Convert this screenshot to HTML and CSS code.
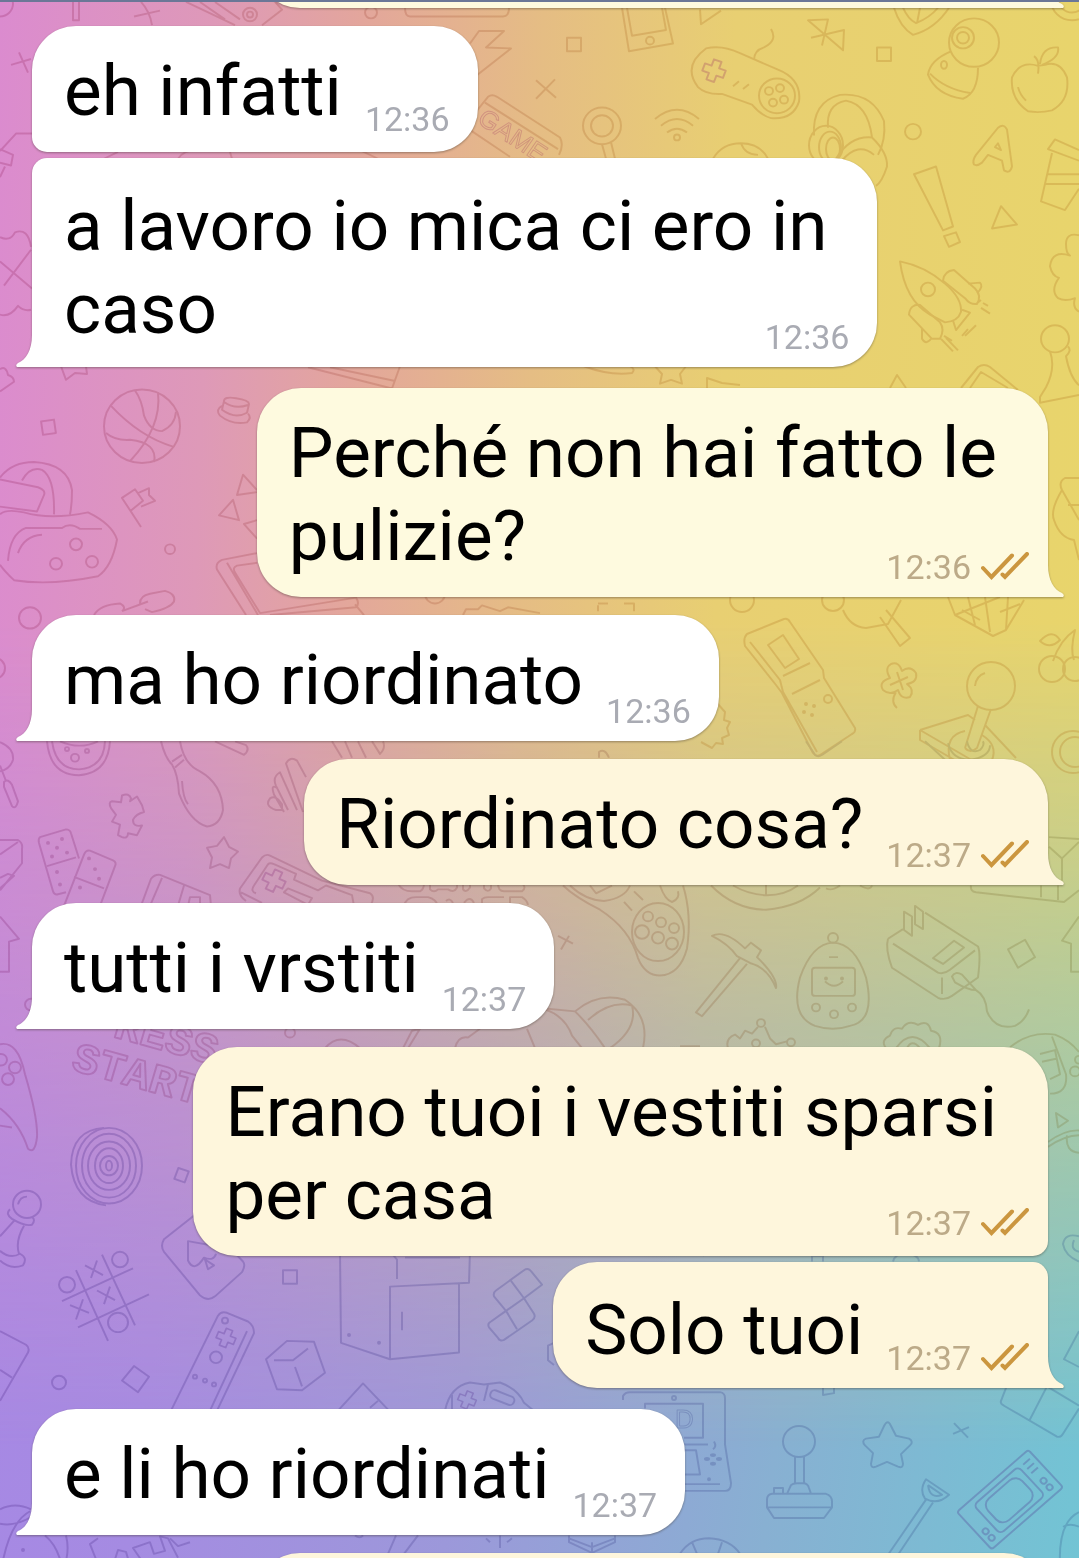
FILE: index.html
```html
<!DOCTYPE html>
<html lang="it">
<head>
  <meta charset="UTF-8">
  <meta name="viewport" content="width=device-width, initial-scale=1.0">
  <link rel="stylesheet" href="styles.css">
  <title>Chat</title>
</head>
<body>

  <svg class="defs" width="0" height="0" aria-hidden="true">
    <symbol id="ticks" viewBox="0 0 48 28">
      <path d="M2 16L10.5 25L31 3.5M21.5 22.5L24 25L46 2"/>
    </symbol>
  </svg>

  <div class="wallpaper">
    <div class="wallpaper-top"></div>
    <svg class="doodles" viewBox="0 0 1079 1558" preserveAspectRatio="xMidYMid slice" aria-hidden="true">
      <defs>
        <linearGradient id="inkTop" gradientUnits="userSpaceOnUse" x1="0" y1="0" x2="700" y2="0">
          <stop offset="0" stop-color="#94235f"/>
          <stop offset="1" stop-color="#b0701c"/>
        </linearGradient>
        <linearGradient id="inkMid" gradientUnits="userSpaceOnUse" x1="0" y1="0" x2="1079" y2="0">
          <stop offset="0" stop-color="#802272"/>
          <stop offset=".6" stop-color="#8f5a3a"/>
          <stop offset="1" stop-color="#767230"/>
        </linearGradient>
        <linearGradient id="inkLow" gradientUnits="userSpaceOnUse" x1="0" y1="0" x2="1079" y2="0">
          <stop offset="0" stop-color="#482286"/>
          <stop offset="1" stop-color="#2f548c"/>
        </linearGradient>
        <path id="dpad" d="M-4 -11H4V-4H11V4H4V11H-4V4H-11V-4H-4Z"/>
      </defs>

      <!-- first rows: controllers, phone, apple, rocket -->
      <g stroke="url(#inkTop)" transform="scale(1 .968)">
        <path d="M11 67L31 61M19 54L28 75M73 2V21H79V2M134 17L160 11M141 2Q150 12 152 26"/>
        <path d="M186 2L235 26M200 2L225 20M215 2L240 20M262 26L282 10L275 2"/>
        <circle cx="250" cy="15" r="7"/><circle cx="250" cy="15" r="3"/>
        <circle cx="0" cy="4" r="13"/>
        <circle cx="371" cy="13" r="6"/>
        <path d="M405 8Q405 17 410 17H503Q509 17 509 8"/>
        <path d="M470 45L479 32H504L486 49L511 50L474 80"/>
        <path d="M536 83L556 101M555 82L536 102"/>
        <path d="M474 118L488 100Q492 97 497 100L560 142Q564 150 559 160M452 150L474 118M485 106L558 154M464 130L510 162"/>
        <text class="word word-small" transform="translate(476 126) rotate(34)">GAME</text>
        <path d="M0 156L16 138H32M0 154L13 160L11 171L0 168M5 172L0 183"/>
        <path d="M0 245Q10 250 15 240Q28 235 31 255M0 270L32 298M31 258L4 295M0 325Q10 328 18 316Q24 322 31 320"/>
        <path d="M104 164L118 157M178 164Q184 155 196 155M230 157L232 164M360 155L378 164"/>

        <rect x="567" y="39" width="14" height="14"/>
        <path d="M622 8L629 53L673 45L665 8M627 8L632 37L666 31L662 8"/><circle cx="650" cy="42" r="4"/>
        <path d="M700 10L701 25L721 11"/>
        <path d="M706 50Q722 46 740 55L778 72Q802 82 799 105Q793 124 771 122Q762 120 752 108L722 97Q706 98 698 90Q682 68 706 50Z"/>
        <circle cx="777" cy="99" r="18"/><circle cx="769" cy="94" r="4"/><circle cx="780" cy="91" r="4"/><circle cx="773" cy="106" r="4"/><circle cx="784" cy="103" r="4"/>
        <use href="#dpad" transform="translate(714 73) rotate(20)"/>
        <path d="M754 62Q754 52 764 49Q778 42 771 30M733 89L739 84M743 92L749 87"/>
        <path d="M811 39L844 31L843 52L808 21L828 20L822 47"/>
        <rect x="877" y="49" width="14" height="14"/>
        <path d="M894 8Q900 28 913 36Q935 30 949 8M903 8Q908 20 916 24Q930 18 938 8M920 8L917 24"/>
        <circle cx="974" cy="44" r="25"/><circle cx="963" cy="39" r="11"/><circle cx="963" cy="39" r="6"/>
        <path d="M951 53Q930 62 928 77Q936 98 963 102Q978 96 978 70M930 76Q945 92 970 96"/><ellipse cx="944" cy="67" rx="3" ry="4"/>
        <path d="M1038 68Q1020 62 1012 80Q1010 102 1028 115Q1040 117 1052 114Q1070 104 1067 80Q1060 62 1045 67ZM1038 76Q1040 62 1034 58M1040 66Q1042 48 1058 49Q1060 60 1042 67M1018 90Q1020 98 1026 104"/>
        <circle cx="1072" cy="0" r="21"/><circle cx="1072" cy="0" r="13"/>
        <circle cx="602" cy="130" r="19"/><circle cx="602" cy="130" r="11"/>
        <path d="M602 149L606 164M611 147L615 164"/>
        <circle cx="677" cy="142" r="3"/>
        <path d="M667 137Q677 129 687 137M661 130Q677 116 693 130M655 123Q677 104 699 123"/>
        <path d="M713 164Q722 148 741 148Q760 148 768 164M741 148Q745 160 758 160"/>
        <path d="M814 140Q812 105 840 98Q872 95 884 125Q886 145 878 160M828 132Q826 108 846 104Q868 108 872 142M836 164Q850 140 872 142Q888 158 887 172Q882 188 876 192M842 166Q858 146 874 160"/>
        <ellipse cx="826" cy="150" rx="17" ry="20"/><ellipse cx="830" cy="152" rx="11" ry="16"/><ellipse cx="833" cy="154" rx="7" ry="12"/>
        <circle cx="913" cy="136" r="8"/>
        <path d="M974 170Q972 166 976 160L998 132Q1004 127 1007 134L1012 172Q1010 180 1004 176L1002 166L988 160L982 168Q977 172 974 170ZM995 152L998 148L1001 155Z"/>
        <path d="M1079 155L1055 144L1048 154L1079 166M1052 158L1041 208L1065 217L1079 195M1048 180H1079M1045 190H1079"/>
        <path d="M914 180L936 172L953 234L943 238ZM944 244L956 240L960 250L949 255Z"/>
        <path d="M1001 213L1017 232L992 236Z"/>
        <path d="M900 270Q905 310 930 325L945 333Q958 332 961 322Q962 308 945 293Q925 275 900 270ZM953 331L956 341L970 323L962 320"/>
        <circle cx="928" cy="299" r="7"/>
        <path d="M943 290Q944 280 954 279L975 298Q982 305 977 314Q970 315 965 308ZM968 293L980 292Q984 296 977 303M976 314L981 310"/>
        <path d="M909 325Q910 314 920 315L940 333Q945 340 940 350L932 350ZM922 340V350Q926 357 931 350"/>
        <path d="M962 347L968 340M965 347L976 336M981 318L990 324M983 313L988 316M946 349L958 362M941 350L953 363M944 347L952 352"/>
        <circle cx="1055" cy="350" r="14"/>
        <path d="M1050 363Q1056 380 1046 400L1040 410V416L1079 408M1068 358Q1072 362 1066 368Q1070 390 1079 398"/>
        <path d="M1079 243Q1066 240 1066 252Q1066 262 1070 264Q1052 258 1050 275Q1052 285 1059 287Q1050 300 1058 308Q1065 312 1075 308Q1072 318 1079 322"/>
      </g>

      <g stroke="url(#inkTop)" transform="matrix(1 0 0 .968 0 11)">
        <path d="M308 368L392 390L400 367M330 368L394 382M584 367Q610 377 632 374Q636 370 630 367"/>
        <path d="M655 367L662 375L660 385L671 381L682 385L680 375L686 367"/>
        <path d="M61 367L66 381L75 374L87 375L86 367M0 370Q6 366 8 376Q14 378 14 383L0 393"/>
        <rect x="42" y="423" width="13" height="14" transform="rotate(-8 48 430)"/>
        <circle cx="142" cy="429" r="38"/>
        <path d="M135 392Q142 402 144 418Q150 434 162 434Q175 428 176 414M158 394Q162 430 130 465M111 408Q140 440 173 450M106 436Q115 444 130 443Q158 446 154 466"/>
        <path d="M224 403Q224 398 236 400Q249 402 249 406L247 415Q235 422 222 412ZM222 408Q215 412 220 418Q232 428 247 425Q252 420 248 416M224 404Q235 412 248 407"/>
        <path d="M0 482Q12 466 34 466Q68 468 72 495Q72 510 70 520M22 485Q30 470 42 474Q55 482 54 520M0 484L38 492Q46 495 44 500L37 517L0 512M0 520Q6 514 24 518Q50 526 88 518Q112 530 117 546Q112 574 98 584Q50 594 14 588Q4 578 0 572M8 568Q10 540 26 534H62Q70 528 80 535H102M18 560Q24 542 42 541"/>
        <circle cx="76" cy="551" r="6"/><circle cx="56" cy="571" r="6"/><circle cx="92" cy="569" r="6"/>
        <path d="M141 533L122 503L135 494L143 506L131 516M141 512L155 506L149 500L149 493L138 498"/>
        <circle cx="170" cy="556" r="5"/>
        <path d="M257 495L243 479L237 500L257 497M233 505L219 521L239 526ZM257 526L244 530L257 545"/>
        <path d="M257 560L222 567Q215 570 217 577L246 624M227 570L258 624M257 570L237 573Q232 575 235 580L260 622L356 606Q360 612 356 616L270 624M355 613L364 624"/>
        <path d="M94 624Q100 613 120 612Q127 616 122 620M122 620L148 610M140 612Q140 604 150 602L165 599Q176 602 174 610Q170 617 152 621L145 618"/>
        <circle cx="30" cy="627" r="11"/><circle cx="-6" cy="679" r="11"/><circle cx="435" cy="602" r="10"/>
        <path d="M463 624L466 618H478L482 614L500 620L508 616L540 622M598 614V620M598 612H608M634 620V612H624"/>
      </g>

      <!-- right edge: handheld, clover, joystick -->
      <g stroke="url(#inkTop)">
        <path d="M961 388L978 367Q984 363 990 367L1018 390M970 388L981 372L1008 388M707 390V378L722 383L740 385M890 388L897 375L906 388"/>
        <circle cx="742" cy="600" r="12"/><circle cx="833" cy="600" r="11"/>
        <path d="M843 610Q850 627 866 628L888 624L901 600M880 617L900 646L910 638L886 610"/>
        <path d="M948 597L955 615L993 636L1006 630L1024 600M955 615L1000 597M975 625L968 597M990 632L985 597M1006 630L1008 597M962 610L980 620M1000 612L1020 604"/>
        <path d="M747 634L784 619Q788 618 790 622L823 670L824 678L855 728Q856 732 852 734L820 755Q816 757 813 753L782 693L776 685L745 646Q743 638 747 634ZM750 642L780 680L783 692L817 752"/>
        <path d="M768 645L783 635L799 659L785 668ZM783 676L810 663M792 694L820 680"/>
        <circle cx="828" cy="699" r="4"/><circle cx="806" cy="704" r="1"/><circle cx="814" cy="706" r="1"/><circle cx="804" cy="712" r="1"/><circle cx="812" cy="715" r="1"/>
        <path d="M890 678Q884 668 891 664Q899 661 902 671Q910 665 916 673Q918 682 907 684Q915 690 910 697Q901 700 898 690Q890 696 883 690Q878 682 890 678ZM890 685L908 677M897 672L903 690M896 692Q890 702 897 708"/>
        <circle cx="991" cy="686" r="24"/>
        <path d="M975 686Q976 676 985 673M978 706L965 748M991 709L977 748Q970 754 965 748M920 730L968 715L975 720M920 730V740L958 762M920 730L975 762M950 760Q944 735 965 731M982 735Q998 745 992 760M985 725L1016 758"/>
        <circle cx="1052" cy="669" r="13"/><circle cx="1075" cy="669" r="12"/>
        <path d="M1053 661Q1060 640 1075 630Q1070 650 1074 660M1040 641Q1052 628 1060 640Q1050 650 1040 641Z"/>
        <circle cx="1073" cy="752" r="21"/><circle cx="1075" cy="752" r="15"/>
        <path d="M1079 478H1065Q1058 482 1062 490L1079 520M1062 490Q1050 510 1054 520Q1060 538 1074 540L1079 560M1068 505H1079"/>
        <path d="M717 703L725 712L724 720L730 722L727 728L729 735L722 738L723 744L716 743L712 748L701 742"/>
      </g>

      <!-- middle rows: bowling pin, dominoes, pickaxe, charger -->
      <g stroke="url(#inkMid)" transform="matrix(1 0 0 .968 0 24)">
        <path d="M0 742Q14 748 13 760Q10 770 0 772M0 766L6 782M4 783Q8 779 12 786L18 803Q16 812 12 808L4 788Z"/>
        <path d="M47 741Q50 776 79 776Q108 774 110 741M52 741Q56 770 79 770Q104 768 105 741M60 741Q80 750 98 741"/>
        <circle cx="75" cy="758" r="4"/><circle cx="67" cy="749" r="2"/><circle cx="87" cy="751" r="2"/>
        <path d="M161 741Q165 758 172 765Q178 775 179 795Q190 824 207 829Q220 828 223 812Q222 785 200 772Q184 765 180 741M172 762L182 755M175 768L184 760M182 782Q183 800 188 806"/>
        <path d="M215 741L244 755Q250 750 246 745L235 741M332 741L342 758M345 741L352 758M358 741L366 758M372 741L380 754Q386 748 383 741"/>
        <path d="M306 778L297 761Q290 756 286 764L303 814M297 812L280 773Q272 778 276 787L288 812M278 790Q270 784 274 796L284 814M276 812Q264 808 270 800Q276 796 282 806L282 812Z"/>
        <path d="M112 803L121 804L122 797Q129 794 131 800L130 803L137 798L142 807L144 814Q136 816 133 822Q133 830 142 828L137 838L128 836Q128 842 122 840L118 838L120 827L112 824L116 817L111 810Q108 804 112 803Z"/>
        <path d="M79 862L71 836Q70 832 66 832L40 840Q38 842 39 846L53 896Q54 900 58 899L66 897M47 870L76 861M64 911L84 858Q86 853 90 854L113 864Q117 866 115 870L100 911M74 881L104 893"/>
        <circle cx="48" cy="846" r="1"/><circle cx="62" cy="842" r="1"/><circle cx="57" cy="851" r="1"/><circle cx="52" cy="860" r="1"/><circle cx="67" cy="856" r="1"/><circle cx="57" cy="876" r="1"/><circle cx="60" cy="889" r="1"/><circle cx="89" cy="862" r="1"/><circle cx="95" cy="873" r="1"/><circle cx="99" cy="883" r="1"/><circle cx="80" cy="892" r="1"/>
        <path d="M224 840L229 850L238 855L231 862L229 872L220 868L210 872L212 861L207 851L217 849Z"/>
        <path d="M0 843H18Q23 846 22 852V867L0 895M18 845L0 858M0 882L8 878L14 880L0 893"/>
        <path d="M141 911L151 883Q155 878 160 879L210 900L211 911M150 911L162 882M178 911L184 890M188 911L190 902H200V911"/>
        <path d="M246 906Q238 900 240 893L262 861Q266 857 270 859L322 885L370 898Q376 902 370 911M241 897L262 908M256 898Q250 896 254 890L268 868Q270 866 274 868L296 878L294 884L318 895L326 890L352 900L354 911M284 897L288 893L312 903L308 910Z"/>
        <use href="#dpad" transform="translate(274 885) rotate(25)"/>
        <path d="M398 888Q402 896 412 896H420Q424 894 424 888M430 888V894Q434 898 438 894H448Q454 898 457 892V888M463 888V894Q466 898 470 892V888M484 888V893Q488 898 491 893V888M498 888Q498 896 504 896H522Q527 892 522 888M404 911Q406 902 416 902H428Q436 904 438 911M446 906Q450 902 453 908M464 908Q470 900 474 908M482 910V904Q484 902 488 902H504M510 910V902H522Q527 905 528 910"/>
        <path d="M599 758V752Q605 748 609 758M0 922L19 945L9 948V979H0"/>

        <path d="M806 741L815 755Q818 758 822 755L842 741M925 741L945 760M948 743Q952 760 970 760Q990 757 990 745M967 741Q970 755 980 750Q985 745 983 741"/>
        <path d="M563 890Q575 902 600 915Q630 935 638 965Q645 983 660 983Q680 982 687 955Q692 920 683 890M570 890Q585 905 604 906Q625 903 630 890M590 890L596 898L612 890M624 907L632 916M634 896L643 905M660 890Q665 905 672 907Q680 904 678 896"/>
        <ellipse cx="658" cy="938" rx="26" ry="30"/>
        <circle cx="648" cy="922" r="5"/><circle cx="661" cy="928" r="5"/><circle cx="674" cy="934" r="5"/><circle cx="642" cy="938" r="7"/><circle cx="658" cy="944" r="6"/><circle cx="672" cy="950" r="6"/>
        <path d="M711 890Q735 915 766 915Q800 912 820 892M733 890Q750 900 767 900Q785 900 798 890M766 886V900M826 893Q832 896 840 890M860 890Q870 896 872 890"/>
        <path d="M558 942L573 950M569 942L561 956"/>
        <path d="M712 942Q725 935 745 955L751 949L761 957L757 964Q778 985 776 996Q768 975 750 970L737 963Q728 950 712 942ZM747 971L702 1025L696 1021L740 965"/>
        <path d="M833 949Q855 950 866 985Q876 1030 850 1035Q833 1041 815 1035Q790 1025 800 985Q812 950 833 949ZM825 989Q834 998 843 989M829 964H838"/>
        <rect x="812" y="975" width="43" height="29" rx="3"/>
        <circle cx="833" cy="944" r="5"/><circle cx="826" cy="986" r="1"/><circle cx="842" cy="986" r="1"/><circle cx="816" cy="1016" r="4"/><circle cx="834" cy="1023" r="4"/><circle cx="852" cy="1016" r="4"/>
        <path d="M888 945Q885 955 892 975L938 1006Q945 1009 952 1004L978 985Q981 960 978 953L925 918M888 945L903 935M893 950L938 980Q944 982 950 977L975 957M933 965L954 947L964 954L943 971ZM904 917L912 922V942L904 936ZM915 911L923 917V935L915 930ZM942 985V1002"/>
        <path d="M952 984Q955 978 962 982L976 998Q968 998 955 990ZM976 998Q986 1004 987 1020Q995 1040 1015 1035Q1025 1030 1029 1018"/>
        <path d="M1008 956L1025 946L1035 964L1018 975ZM1079 922L1062 947L1071 950V979H1079"/>
        <path d="M1049 840L1079 842M1049 850L1062 862L1079 845M1062 862V885M971 890Q970 896 976 897L1064 907L1079 895M1041 890V902M1058 890V905"/>
        <path d="M545 1017L575 1020Q598 1000 625 1008Q650 1025 643 1058M545 1018Q565 1025 572 1045L582 1058M575 1020Q590 1035 605 1058M588 1029Q610 1008 632 1014Q638 1038 610 1058"/>
        <path d="M728 1058Q725 1048 735 1044L740 1048L745 1040L752 1043L758 1036M765 1036L770 1048L776 1054L787 1051M680 1056H700"/>
        <circle cx="761" cy="1032" r="4"/><circle cx="791" cy="1052" r="4"/><circle cx="756" cy="1053" r="4"/>
        <path d="M886 1058Q880 1050 890 1045Q893 1035 902 1038Q908 1028 918 1034Q928 1028 931 1040Q944 1042 939 1058M896 1058Q912 1035 930 1058M907 1058Q912 1048 920 1058"/>
        <path d="M1010 1057Q1030 1040 1055 1044Q1070 1050 1079 1062M1050 1105Q1068 1105 1066 1085L1052 1046M1040 1064L1055 1060L1060 1085L1050 1090M1042 1072L1056 1069"/>
        <circle cx="1075" cy="1082" r="5"/><circle cx="1079" cy="1070" r="4"/>
        <path d="M1056 1125L1068 1133L1058 1140ZM1048 1155Q1065 1142 1079 1143M1048 1160Q1065 1148 1079 1148M1067 1148Q1065 1165 1079 1166"/>
        <circle cx="290" cy="1042" r="5"/>
        <circle cx="31" cy="1013" r="6"/>
        <path d="M325 1058Q340 1040 360 1058M403 1058L412 1040L420 1038L408 1058M455 1058Q458 1045 468 1047L480 1038M527 1038L535 1058"/>
        <text class="word word-pixel" transform="translate(112 1046) rotate(16)">RESS</text>
        <text class="word word-pixel" transform="translate(70 1080) rotate(16)">START</text>
        <path d="M0 1054Q18 1050 25 1085Q38 1130 37 1150Q35 1168 28 1162Q20 1136 0 1120M0 1138L12 1140"/>
        <circle cx="1" cy="1070" r="6"/><circle cx="15" cy="1078" r="6"/><circle cx="8" cy="1090" r="6"/>
      </g>

      <!-- last rows: board games, remote, joystick, tv -->
      <g stroke="url(#inkLow)" transform="matrix(1 0 0 .968 0 36)">
        <ellipse cx="109" cy="1167" rx="33" ry="39"/><ellipse cx="109" cy="1167" rx="27" ry="33"/><ellipse cx="109" cy="1167" rx="21" ry="25"/><ellipse cx="109" cy="1167" rx="14" ry="18"/><ellipse cx="109" cy="1167" rx="9" ry="10"/><ellipse cx="109" cy="1167" rx="3" ry="5"/>
        <path d="M104 1128Q72 1130 71 1166Q74 1204 106 1208"/>
        <rect x="176" y="1171" width="11" height="12" transform="rotate(20 182 1177)"/>
        <circle cx="27" cy="1207" r="14"/>
        <path d="M18 1207Q20 1199 27 1199M10 1212Q5 1217 12 1222Q25 1230 32 1228Q36 1223 32 1220M14 1224L0 1240M24 1229Q15 1245 19 1258M0 1255Q10 1264 20 1258Q28 1262 23 1270Q10 1275 0 1265"/>
        <path d="M62 1307L133 1273M78 1334L149 1300M76 1275L108 1348M102 1259L135 1332M85 1270L103 1280M97 1265L91 1283M97 1296L115 1306M110 1292L104 1310M70 1311L89 1319M83 1305L76 1326"/>
        <circle cx="67" cy="1290" r="8"/><circle cx="120" cy="1264" r="8"/><circle cx="118" cy="1329" r="10"/>
        <path d="M196 1217L164 1243Q160 1250 164 1256L200 1301Q208 1308 215 1302L242 1277Q246 1270 243 1266L230 1252M215 1250L188 1245V1265Q194 1278 204 1262Q214 1266 216 1258M205 1264L214 1270L208 1274Z"/>
        <rect x="283" y="1275" width="14" height="14"/>
        <path d="M340 1255L341 1350L390 1367V1292L469 1288L470 1255M390 1367L459 1360V1289M392 1258L397 1264V1284M402 1318V1337M405 1262H460"/>
        <circle cx="349" cy="1342" r="1"/><circle cx="379" cy="1350" r="1"/>
        <path d="M494 1302Q493 1298 496 1296L524 1275Q528 1272 531 1276L542 1290L524 1304L534 1320Q536 1324 532 1327L504 1347Q500 1349 498 1345L489 1334Q487 1330 491 1328L506 1317ZM511 1286L524 1304L506 1317L517 1336"/>
        <path d="M171 1420L218 1322Q221 1317 227 1319L248 1328Q254 1332 254 1340L217 1420M247 1338L210 1420"/>
        <circle cx="225" cy="1327" r="3"/><circle cx="216" cy="1365" r="6"/><circle cx="195" cy="1385" r="2"/><circle cx="205" cy="1389" r="2"/><circle cx="214" cy="1393" r="2"/>
        <use href="#dpad" transform="translate(226 1345) rotate(22) scale(.85)"/>
        <path d="M287 1348L314 1349L325 1381L302 1399L277 1398L266 1367ZM274 1368H293L308 1356M295 1375L302 1395"/>
        <path d="M134 1374L149 1385L138 1401L122 1389Z"/><circle cx="59" cy="1391" r="7"/>
        <path d="M0 1338L26 1352Q30 1355 28 1360L0 1410M0 1378L12 1386M338 1420L363 1392L389 1420M370 1417L378 1410"/>
        <path d="M445 1420Q450 1395 470 1391L484 1393L500 1391Q518 1398 524 1412L536 1422M452 1404V1420M484 1410L488 1393"/>
        <rect x="490" y="1402" width="25" height="9" rx="4" transform="rotate(22 502 1406)"/>
        <use href="#dpad" transform="translate(467 1409) rotate(22) scale(.8)"/>
        <path d="M0 1522Q15 1514 31 1522M0 1537Q15 1540 31 1530M2 1580Q10 1535 30 1524M45 1549Q58 1560 62 1582M66 1549Q70 1565 64 1582"/>
        <circle cx="23" cy="1564" r="1"/>
        <path d="M100 1584L90 1558L98 1552M113 1580L118 1564L126 1566L130 1580M145 1580L133 1562L150 1556L154 1568L165 1565L160 1550L168 1552L178 1572M170 1552L178 1560L190 1556"/>

        <path d="M610 1260L618 1252H690L704 1260M812 1266V1260H823V1266M893 1266Q895 1258 905 1258Q918 1258 919 1266M554 1350L548 1353V1368L554 1373"/>
        <path d="M623 1409V1405Q625 1401 630 1401H720Q725 1402 725 1407V1455L731 1495Q731 1503 725 1503H685M645 1418V1413H703V1448H684M684 1455H708M714 1452Q717 1457 713 1460M684 1461H696L700 1486H684M684 1496H720"/>
        <text class="word word-small" x="675" y="1438">D</text>
        <circle cx="674" cy="1407" r="2"/><ellipse cx="713" cy="1466" rx="2" ry="1"/><ellipse cx="713" cy="1475" rx="2" ry="1"/><ellipse cx="707" cy="1470" rx="2" ry="1"/><ellipse cx="719" cy="1470" rx="2" ry="1"/><circle cx="709" cy="1491" r="1"/>
        <path d="M823 1391V1404L834 1402V1391"/>
        <circle cx="799" cy="1452" r="16"/>
        <path d="M795 1468V1495M804 1468V1495M787 1506L791 1497Q793 1495 797 1495H803Q808 1495 809 1500L811 1506M774 1506V1500H783V1506M772 1506H826Q832 1508 832 1514V1520L824 1531H774L767 1520V1512Q767 1507 772 1506ZM767 1520H832"/>
        <path d="M884 1436Q888 1428 891 1436L896 1446L909 1449Q914 1452 910 1456L901 1465L903 1475Q903 1480 898 1478L887 1473L876 1478Q871 1480 871 1475L873 1464L865 1456Q861 1451 866 1449L879 1447Z"/>
        <path d="M954 1433L968 1448M969 1437L953 1444"/>
        <path d="M926 1491L949 1507Q938 1518 925 1511Q919 1502 926 1491ZM928 1497L942 1507Q930 1512 928 1497M926 1512L886 1572M933 1515L896 1572"/>
        <g transform="translate(1010 1512) rotate(-42)">
          <rect x="-48" y="-26" width="96" height="52" rx="3"/><rect x="-31" y="-20" width="60" height="40" rx="5"/><rect x="-24" y="-15" width="46" height="30" rx="9"/>
          <circle cx="38" cy="8" r="3"/><circle cx="38" cy="17" r="3"/><circle cx="-40" cy="8" r="3"/><circle cx="-40" cy="17" r="3"/>
          <path d="M34 -18H43M34 -12H43M34 -6H43"/>
        </g>
        <path d="M1079 1338L1064 1367L1079 1375M1010 1386L1001 1410Q1000 1413 1004 1415L1057 1447Q1061 1448 1063 1444L1079 1418M1029 1431L1047 1395L1079 1415"/>
        <path d="M1079 1240Q1065 1236 1063 1248Q1065 1260 1079 1266M1079 1256Q1070 1254 1074 1244M1079 1525Q1058 1535 1060 1580M1063 1540Q1070 1536 1079 1540"/>
        <path d="M680 1568Q690 1552 709 1552Q730 1553 740 1568M692 1556L697 1568M722 1556L718 1568M569 1549V1556L592 1567L615 1556V1549M592 1556V1567M569 1552L592 1561L615 1552"/>
        <path d="M388 1568L396 1549M404 1568L418 1549M486 1552L490 1556M500 1549V1562M355 1549Q360 1553 363 1549M512 1552L507 1556"/>
      </g>
    </svg>
  </div>

  <div class="topbar"></div>

  <main class="chat">
    <div class="bubble out light tail cut cut-top"></div>

    <div class="stack">
      <div class="bubble in first">
        <p>eh infatti</p>
        <span class="meta"><time>12:36</time></span>
      </div>
      <div class="bubble in tail follow long">
        <p>a lavoro io mica ci ero in<br>caso</p>
        <span class="meta"><time>12:36</time></span>
      </div>
    </div>

    <div class="bubble out light tail long">
      <p>Perché non hai fatto le<br>pulizie?</p>
      <span class="meta"><time>12:36</time><svg class="ticks" aria-hidden="true"><use href="#ticks"/></svg></span>
    </div>

    <div class="bubble in tail">
      <p>ma ho riordinato</p>
      <span class="meta"><time>12:36</time></span>
    </div>

    <div class="bubble out tail">
      <p>Riordinato cosa?</p>
      <span class="meta"><time>12:37</time><svg class="ticks" aria-hidden="true"><use href="#ticks"/></svg></span>
    </div>

    <div class="bubble in tail">
      <p>tutti i vrstiti</p>
      <span class="meta"><time>12:37</time></span>
    </div>

    <div class="stack">
      <div class="bubble out first long">
        <p>Erano tuoi i vestiti sparsi<br>per casa</p>
        <span class="meta"><time>12:37</time><svg class="ticks" aria-hidden="true"><use href="#ticks"/></svg></span>
      </div>
      <div class="bubble out tail follow">
        <p>Solo tuoi</p>
        <span class="meta"><time>12:37</time><svg class="ticks" aria-hidden="true"><use href="#ticks"/></svg></span>
      </div>
    </div>

    <div class="bubble in tail">
      <p>e li ho riordinati</p>
      <span class="meta"><time>12:37</time></span>
    </div>

    <div class="bubble out cut"></div>
  </main>

</body>
</html>
```

FILE: styles.css
```css
* {
  box-sizing: border-box;
}

body {
  margin: 0;
  height: 100vh;
  overflow: hidden;
  font-family: Roboto, "Noto Sans", sans-serif;
  color: #000;
}

.defs {
  position: absolute;
}

/* wallpaper */
.wallpaper {
  position: fixed;
  inset: 0;
  z-index: -1;
  background: linear-gradient(97deg, #a886e6 0%, #a58be2 25%, #9c98da 50%, #88b0d2 75%, #72c4d4 100%);
}

.wallpaper-top {
  position: absolute;
  inset: 0;
  background: linear-gradient(92deg, #db8bcf 0%, #de99b8 19%, #e3a69c 32%, #e5bd84 48%, #e8cf72 65%, #e8d56b 100%);
  -webkit-mask-image: linear-gradient(to bottom, #000 40%, transparent 93%);
  mask-image: linear-gradient(to bottom, #000 40%, transparent 93%);
}

.doodles {
  position: absolute;
  width: 100%;
  height: 100%;
  fill: none;
  stroke-width: 2;
  stroke-linejoin: round;
  opacity: .25;
}

.word {
  font-family: "Liberation Sans", sans-serif;
}

.word-small {
  font-size: 26px;
  stroke-width: 1;
}

.word-pixel {
  font-family: "Liberation Mono", monospace;
  font-size: 44px;
  font-weight: bold;
}

/* messages */
.topbar {
  height: 2px;
  background: #6b7797;
}

.chat {
  display: flex;
  flex-direction: column;
  gap: 18px;
  height: calc(100vh - 2px);
  padding: 0 31px 0 32px;
  overflow: hidden;
}

.stack {
  display: flex;
  flex-direction: column;
  flex: none;
  gap: 6px;
  padding-bottom: 3px;
}

.bubble {
  position: relative;
  display: grid;
  grid-template-columns: auto auto;
  column-gap: 23px;
  flex: none;
  align-items: end;
  padding: 23px 28px 20px 32px;
  border-radius: 44px;
  filter: drop-shadow(0 1px 1px rgba(60, 50, 40, .45));
}

.bubble p {
  margin: 0;
  font-size: 71px;
  line-height: 83px;
  white-space: nowrap;
}

.in {
  align-self: flex-start;
  background: #fff;
}

.out {
  align-self: flex-end;
  padding-right: 19px;
  background: #fef6dc;
}

.light {
  background: #fefadf;
}

.in.first {
  border-bottom-left-radius: 15px;
}

.out.first {
  border-bottom-right-radius: 15px;
}

.in.follow {
  border-top-left-radius: 15px;
}

.out.follow {
  border-top-right-radius: 15px;
}

.follow {
  padding-top: 26px;
  padding-bottom: 17px;
}

.in.tail {
  border-bottom-left-radius: 0;
}

.out.tail {
  border-bottom-right-radius: 0;
}

.tail::after {
  content: "";
  position: absolute;
  bottom: 0;
  width: 18px;
  height: 32px;
  background: inherit;
}

.in.tail::after {
  left: -16px;
  clip-path: path("M16 0C16 15 10 25 2 28Q-1 30 1 32H18V0Z");
}

.out.tail::after {
  right: -16px;
  clip-path: path("M2 0C2 15 8 25 16 28Q19 30 17 32H0V0Z");
}

/* two lines of text: the time sits in the same cell */
.long p,
.long .meta {
  grid-area: 1 / 1;
}

.long {
  grid-template-columns: auto;
}

.in.long p {
  padding-right: 22px;
}

.out.long p {
  padding-right: 32px;
}

.meta {
  display: flex;
  align-items: flex-end;
  justify-self: end;
  gap: 10px;
  margin-bottom: -10px;
  font-size: 34px;
  line-height: 40px;
  color: #a9abb3;
}

.first .meta,
.follow .meta {
  margin-bottom: -7px;
}

.out .meta {
  color: #bcaa88;
}

.ticks {
  width: 48px;
  height: 28px;
  margin-bottom: 7px;
  fill: none;
  stroke: #cb963f;
  stroke-width: 4;
  stroke-linecap: round;
}

/* neighbours cut off by the edges of the view */
.cut {
  width: 78%;
  height: 126px;
}

.cut-top {
  margin-top: -120px;
}
```
